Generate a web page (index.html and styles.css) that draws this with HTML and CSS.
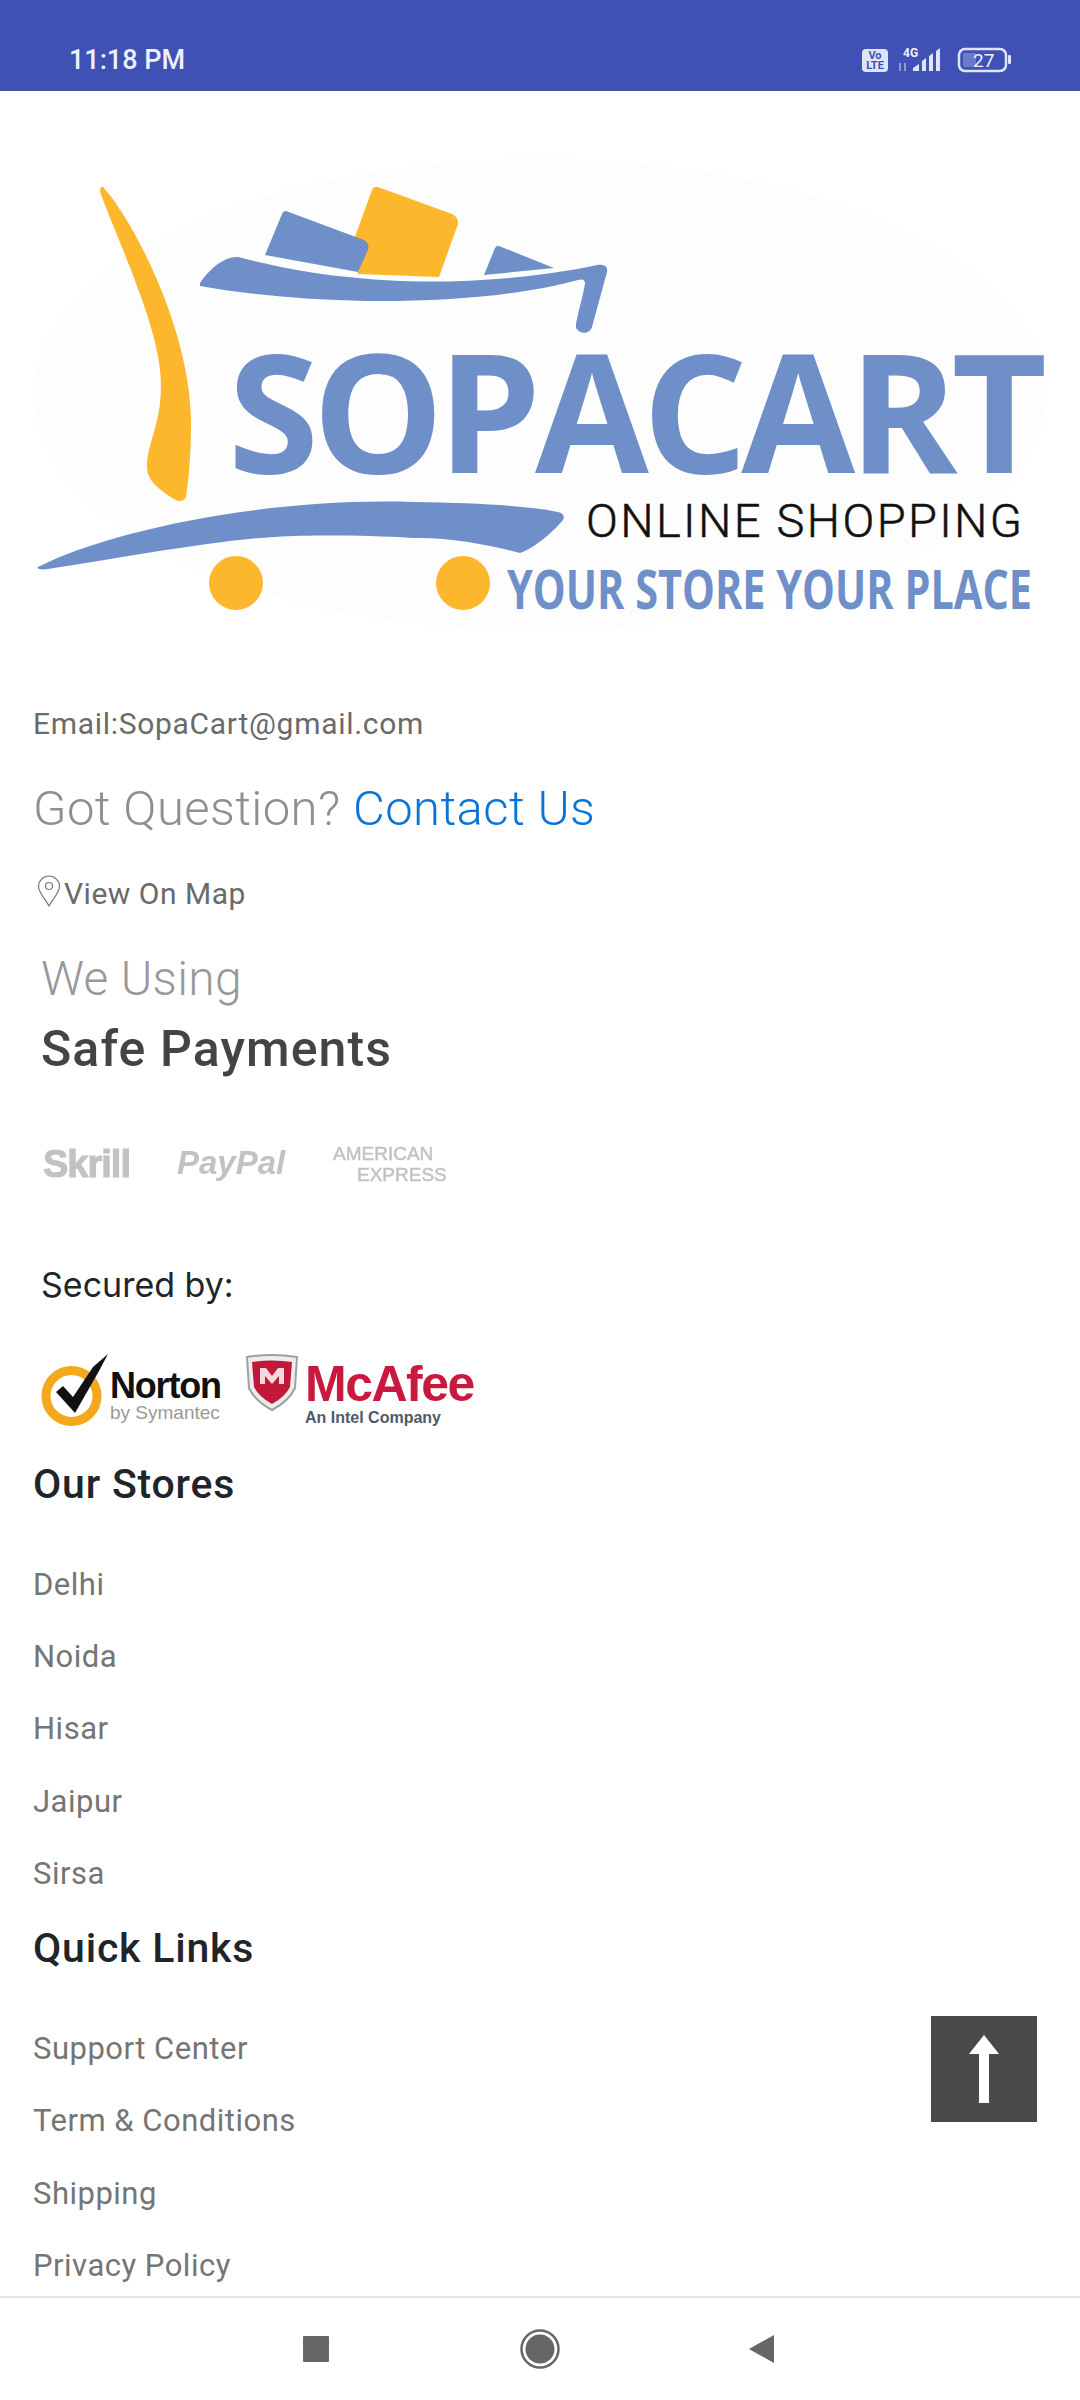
FILE: index.html
```html
<!DOCTYPE html>
<html lang="en">
<head>
    <meta charset="UTF-8">
    <meta name="viewport" content="width=device-width, initial-scale=1.0">
    <title>SopaCart</title>
    <link rel="stylesheet" href="styles.css">
</head>
<body>

    <!-- Status bar -->
    <div class="status-bar">
        <span class="status-time">11:18 PM</span>
        <svg class="status-icons" width="160" height="30" viewBox="860 44 160 30">
            <rect x="862" y="48" width="26" height="23" rx="4" fill="#dfe4f8"/>
            <text x="875" y="58" class="volte-text">Vo</text>
            <text x="875" y="68" class="volte-text">LTE</text>
            <text x="903" y="56" class="net-text">4G</text>
            <path d="M900 62v8M905 62v8" stroke="#8f9bd8" stroke-width="2"/>
            <path d="M913 70v-3l6-4v7zM922 70v-10l4-3v13zM929 70v-15l4-3v18zM936 70v-20l4-3v23z" fill="#dfe4f8"/>
            <rect x="959" y="48" width="47" height="22" rx="6" fill="none" stroke="#dfe4f8" stroke-width="2.5"/>
            <rect x="963" y="52" width="13" height="14" rx="1" fill="#6a7bca"/>
            <text x="973" y="66" class="batt-text">27</text>
            <rect x="1008" y="54" width="3" height="9" rx="1" fill="#dfe4f8"/>
        </svg>
    </div>

    <div class="page">
        <!-- Logo -->
        <svg class="logo" width="1080" height="610" viewBox="0 91 1080 610">
            <ellipse cx="540" cy="395" rx="506" ry="236" fill="#fdfdfd"/>
            <path d="M103 187C132 218 191 330 191 423C191 450 189 480 186 497C184 502 178 502 174 499C158 489 147 480 147 467C147 440 165 420 160 370C155 320 120 245 100 192C100 188 101 186 103 187Z" fill="#fdb72d"/>
            <path d="M378 187L452 214Q459 218 458 224L439 277L358 274L352 245L372 190Q374 186 378 187Z" fill="#fdb72d"/>
            <path d="M286 211L364 240Q370 244 368 250L358 272L265 255L282 214Q283 211 286 211Z" fill="#6f8fc9"/>
            <path d="M499 246L554 268L484 275L495 248Q497 245 499 246Z" fill="#6f8fc9"/>
            <path d="M200 283C210 268 225 256 238 257C280 268 320 275 358 278C420 285 520 282 597 265C605 264 608 267 607 272L592 327C590 334 580 335 576 328C575 322 585 290 585 282C584 279 582 279 578 280C520 296 440 302 365 301C310 300 250 295 200 286Z" fill="#6f8fc9"/>
            <path d="M38 567C110 530 270 497 413 502C480 503 530 506 558 512C563 513 565 516 563 520C555 530 535 548 520 553C490 545 450 537 413 538C360 535 310 535 275 537C215 540 110 560 48 569C42 570 36 569 38 567Z" fill="#6f8fc9"/>
            <circle cx="236" cy="583" r="27" fill="#fdb72d"/>
            <circle cx="463" cy="583" r="27" fill="#fdb72d"/>
            <text x="228" y="473" class="logo-name">SOPACART</text>
            <text x="586" y="537" class="logo-sub" textLength="436" lengthAdjust="spacing">ONLINE SHOPPING</text>
            <text x="507" y="609" class="logo-tag" textLength="525" lengthAdjust="spacingAndGlyphs">YOUR STORE YOUR PLACE</text>
        </svg>

        <div class="content">
            <p class="email">Email:SopaCart@gmail.com</p>
            <p class="question">Got Question? <a href="#" class="contact-link">Contact Us</a></p>
            <p class="map-link">
                <svg class="pin" width="24" height="32" viewBox="0 0 24 32">
                    <path d="M12 31C8 24 1.5 17 1.5 11.5a10.5 10.5 0 0 1 21 0C22.500 17 16 24 12 31Z" fill="none" stroke="#777" stroke-width="1.2"/>
                    <circle cx="12" cy="11" r="3.500" fill="none" stroke="#777" stroke-width="1.2"/>
                </svg>View On Map
            </p>

            <p class="using">We Using</p>
            <h2 class="safe">Safe Payments</h2>

            <div class="pay-logos">
                <span class="pay-skrill">Skrill</span>
                <span class="pay-paypal">PayPal</span>
                <span class="pay-amex"><span>AMERICAN</span><span class="amex-second">EXPRESS</span></span>
            </div>

            <p class="secured">Secured by:</p>

            <div class="secure-logos">
                <div class="norton">
                    <svg width="71" height="75" viewBox="0 0 71 75">
                        <circle cx="32.500" cy="45" r="25.500" fill="none" stroke="#f4a81c" stroke-width="9"/>
                        <path d="M17 41L24 35L34 46L54 16L69 3L60 20L36 62Z" fill="#111"/>
                    </svg>
                    <div class="norton-text">
                        <span class="norton-name">Norton</span>
                        <span class="norton-by">by Symantec</span>
                    </div>
                </div>
                <div class="mcafee">
                    <svg width="54" height="58" viewBox="0 0 54 58">
                        <path d="M2 3Q27 -1 52 3L50 34Q44 47 27 56Q10 47 4 34Z" fill="#eceeee" stroke="#9aa3a3" stroke-width="2"/>
                        <path d="M7 8Q27 5 47 8L45 33Q40 43 27 50Q14 43 9 33Z" fill="#c2183a"/>
                        <path d="M15 30V14L21 14L27 22L33 14L39 14V30L34 30V22L27 30L20 22V30Z" fill="#f4d9de"/>
                    </svg>
                    <div class="mcafee-text">
                        <span class="mcafee-name">McAfee</span>
                        <span class="mcafee-by">An Intel Company</span>
                    </div>
                </div>
            </div>

            <h3 class="footer-title">Our Stores</h3>
            <ul class="footer-list">
                <li>Delhi</li>
                <li>Noida</li>
                <li>Hisar</li>
                <li>Jaipur</li>
                <li>Sirsa</li>
            </ul>

            <h3 class="footer-title quick">Quick Links</h3>
            <ul class="footer-list">
                <li>Support Center</li>
                <li>Term &amp; Conditions</li>
                <li>Shipping</li>
                <li>Privacy Policy</li>
            </ul>
        </div>

        <!-- Back to top -->
        <a href="#" class="to-top">
            <svg width="32" height="70" viewBox="0 0 32 70">
                <path d="M16 1L31 20H21V69H11V20H1Z" fill="#fff"/>
            </svg>
        </a>
    </div>

    <!-- Nav bar -->
    <div class="nav-bar">
        <span class="nav-square"></span>
        <svg width="42" height="42" viewBox="0 0 42 42">
            <circle cx="21" cy="21" r="18.500" fill="none" stroke="#666" stroke-width="2.500"/>
            <circle cx="21" cy="21" r="14.500" fill="#666"/>
        </svg>
        <svg class="nav-back" width="26" height="30" viewBox="0 0 26 30">
            <path d="M26 1V29L1 15Z" fill="#666"/>
        </svg>
    </div>

</body>
</html>
```

FILE: styles.css
```css
* {
    box-sizing: border-box;
    margin: 0;
    padding: 0;
}

body {
    width: 1080px;
    height: 2400px;
    display: flex;
    flex-direction: column;
    overflow: hidden;
    background-color: #fff;
    font-family: Roboto, "Liberation Sans", sans-serif;
}

/* Status bar */
.status-bar {
    height: 91px;
    flex-shrink: 0;
    background-color: #3f51b5;
    border-bottom: 1px solid #4a5391;
    position: relative;
    display: flex;
    align-items: center;
    justify-content: space-between;
    padding: 29px 60px 0 69px;
}

.status-time {
    color: #eef0fb;
    font-size: 27px;
    font-weight: 500;
}

.volte-text {
    font-family: Roboto, sans-serif;
    font-size: 11px;
    font-weight: 700;
    text-anchor: middle;
    fill: #3f51b5;
}

.net-text {
    font-family: Roboto, sans-serif;
    font-size: 12px;
    font-weight: 700;
    fill: #eef0fb;
}

.batt-text {
    font-family: Roboto, sans-serif;
    font-size: 19px;
    fill: #eef0fb;
}

/* Page */
.page {
    flex: 1;
    position: relative;
    overflow: hidden;
}

.logo {
    display: block;
}

.logo-name {
    font-family: "Open Sans", sans-serif;
    font-size: 165px;
    font-weight: 700;
    letter-spacing: -6.3px;
    fill: #6f8fc9;
}

.logo-sub {
    font-family: Roboto, sans-serif;
    font-size: 47px;
    font-weight: 300;
    fill: #111;
    stroke: #111;
    stroke-width: 0.5px;
}

.logo-tag {
    font-family: "Open Sans", sans-serif;
    font-size: 53px;
    font-weight: 700;
    fill: #6f8fc9;
}

.content {
    padding: 0 33px;
}

.email {
    padding-top: 1px;
    font-size: 30px;
    line-height: 44px;
    letter-spacing: 0.7px;
    color: #6a6a6a;
}

.question {
    margin-top: 32px;
    padding-top: 1px;
    font-size: 49px;
    line-height: 60px;
    font-weight: 300;
    letter-spacing: 0.4px;
    color: #8f8f8f;
}

.contact-link {
    color: #0b74d9;
    text-decoration: none;
}

.map-link {
    margin-top: 33px;
    display: flex;
    align-items: center;
    font-size: 30px;
    line-height: 44px;
    letter-spacing: 0.5px;
    color: #6a6a6a;
}

.pin {
    margin: -6px 3px 0 4px;
}

.using {
    margin: 33px 0 0 8px;
    font-size: 48px;
    line-height: 60px;
    font-weight: 300;
    letter-spacing: 0.3px;
    color: #999;
}

.safe {
    margin: 10px 0 0 8px;
    font-size: 50px;
    line-height: 60px;
    font-weight: 500;
    letter-spacing: 1.1px;
    color: #444;
}

/* Payment logos */
.pay-logos {
    margin: 65px 0 0 10px;
    height: 40px;
    display: flex;
    align-items: center;
    color: #c2c2c2;
    filter: blur(0.7px);
    font-family: "Liberation Sans", sans-serif;
    font-weight: 700;
}

.pay-skrill {
    width: 134px;
    font-size: 38px;
    letter-spacing: -1px;
    -webkit-text-stroke: 1px #c2c2c2;
}

.pay-paypal {
    width: 156px;
    margin-top: -3px;
    font-size: 33px;
    font-style: italic;
}

.pay-amex {
    display: flex;
    flex-direction: column;
    font-size: 19px;
    line-height: 21px;
    font-weight: 400;
    -webkit-text-stroke: 0.5px #c2c2c2;
}

.amex-second {
    margin-left: 24px;
}

.secured {
    margin: 79px 0 0 8px;
    font-family: Inter, sans-serif;
    font-size: 34px;
    line-height: 44px;
    color: #212529;
}

/* Security logos */
.secure-logos {
    margin: 44px 0 0 6px;
    height: 75px;
    display: flex;
    gap: 23px;
}

.norton,
.mcafee {
    display: flex;
}

.norton {
    width: 183px;
}

.norton-text,
.mcafee-text {
    display: flex;
    flex-direction: column;
    font-family: "Liberation Sans", sans-serif;
}

.norton-text {
    margin-top: 17px;
}

.norton-name {
    font-size: 36px;
    line-height: 36px;
    font-weight: 700;
    letter-spacing: -1.2px;
    color: #111;
}

.norton-by {
    margin-top: -2px;
    font-size: 19px;
    line-height: 22px;
    color: #9a9a9a;
}

.mcafee svg {
    margin: 3px 6px 0 0;
}

.mcafee-text {
    margin-top: 11px;
}

.mcafee-name {
    font-size: 50px;
    line-height: 44px;
    font-weight: 700;
    letter-spacing: -1.5px;
    color: #c8193f;
}

.mcafee-by {
    margin-top: 1px;
    font-size: 16px;
    line-height: 22px;
    font-weight: 700;
    color: #4d5a6b;
}

/* Footer lists */
.footer-title {
    margin-top: 33px;
    font-size: 41px;
    line-height: 50px;
    font-weight: 500;
    letter-spacing: 0.8px;
    color: #212529;
}

.footer-title.quick {
    margin-top: 14px;
}

.footer-list {
    margin-top: 39px;
    list-style: none;
}

.footer-list li {
    height: 72.3px;
    display: flex;
    align-items: center;
    font-size: 31px;
    letter-spacing: 0.5px;
    color: #757575;
}

/* Back to top */
.to-top {
    position: absolute;
    left: 931px;
    top: 1925px;
    width: 106px;
    height: 106px;
    display: flex;
    align-items: center;
    justify-content: center;
    background-color: #4a4a4a;
}

/* Nav bar */
.nav-bar {
    height: 104px;
    flex-shrink: 0;
    background-color: #fff;
    border-top: 2px solid #e6e6e6;
    display: flex;
    align-items: center;
    padding-left: 303px;
    gap: 190px;
}

.nav-square {
    width: 26px;
    height: 26px;
    background-color: #666;
    border-radius: 1px;
}

.nav-back {
    margin-left: -3px;
}
```
